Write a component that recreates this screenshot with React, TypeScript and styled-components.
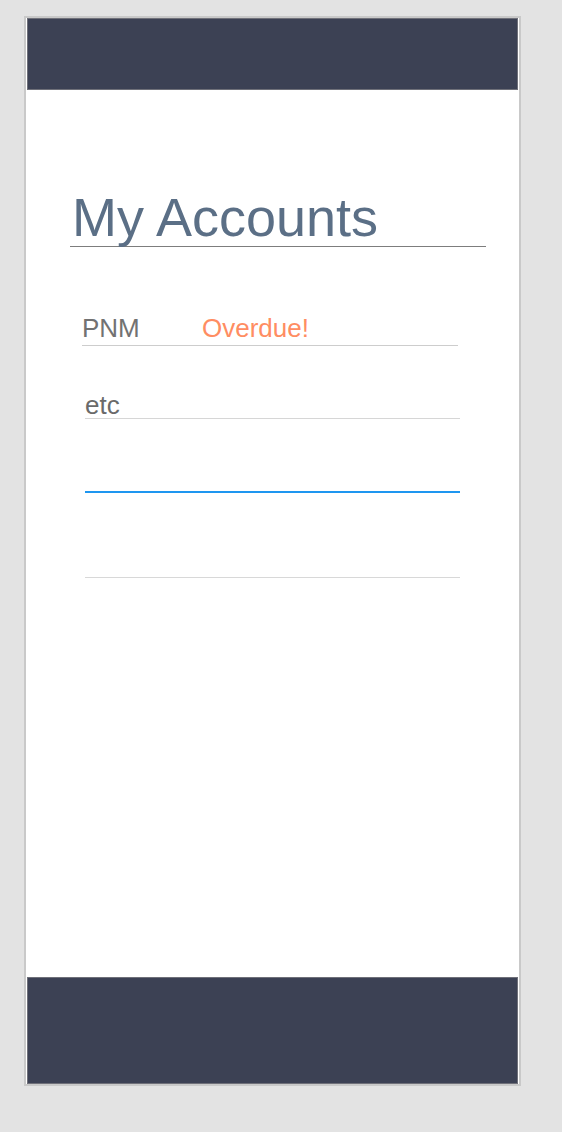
import React from "react";
import styled, { createGlobalStyle } from "styled-components";

const GlobalStyle = createGlobalStyle`
  html, body {
    margin: 0;
    padding: 0;
    background: #e3e3e3;
  }
  body {
    font-family: "Liberation Sans", Arial, Helvetica, sans-serif;
  }
`;

const Page = styled.div`
  padding: 16px 0 0 24px;
  min-height: 1132px;
  box-sizing: border-box;
`;

const Frame = styled.div`
  width: 497px;
  height: 1070px;
  box-sizing: border-box;
  border: 2px solid #c9c9c9;
  background: #ffffff;
  display: flex;
  flex-direction: column;
`;

const Bar = styled.div<{ $h: number }>`
  height: ${(p) => p.$h}px;
  flex: 0 0 auto;
  box-sizing: border-box;
  background: #3c4154;
  border: 1px solid #6f7079;
  margin: 0 1px 0 1px;
`;

const Main = styled.main`
  flex: 1;
  padding: 98px 0 0 44px;
  display: flex;
  flex-direction: column;
`;

const Title = styled.h1`
  margin: 0;
  width: 414px;
  padding-left: 2px;
  font-size: 54px;
  line-height: 58px;
  font-weight: 400;
  color: #5b6f86;
  border-bottom: 1px solid #7d7d7d;
`;

const Field = styled.div<{ $mt: number; $left: number; $w: number; $line: string; $lw: number }>`
  margin-top: ${(p) => p.$mt}px;
  margin-left: ${(p) => p.$left}px;
  width: ${(p) => p.$w}px;
  display: flex;
  align-items: flex-start;
  border-bottom: ${(p) => p.$lw}px solid ${(p) => p.$line};
`;

const Label = styled.span<{ $size: number; $lh: number; $w?: number; $color: string }>`
  font-size: ${(p) => p.$size}px;
  line-height: ${(p) => p.$lh}px;
  color: ${(p) => p.$color};
  width: ${(p) => (p.$w ? `${p.$w}px` : "auto")};
  display: block;
`;

const Spacer = styled.div<{ $h: number }>`
  height: ${(p) => p.$h}px;
`;

export default function App() {
  return (
    <>
      <GlobalStyle />
      <Page>
        <Frame>
          <Bar $h={72} />
          <Main>
            <Title>My Accounts</Title>
            <Field $mt={66} $left={12} $w={376} $line="#cdcdcd" $lw={1}>
              <Spacer $h={32} />
              <Label $size={26} $lh={30} $w={120} $color="#727272">
                PNM
              </Label>
              <Label $size={26} $lh={30} $color="#ff8d62">
                Overdue!
              </Label>
            </Field>
            <Field $mt={46} $left={15} $w={375} $line="#d6d6d6" $lw={1}>
              <Label $size={26} $lh={26} $color="#6a6a6a">
                etc
              </Label>
            </Field>
            <Field $mt={46} $left={15} $w={375} $line="#1e96f0" $lw={2}>
              <Spacer $h={26} />
            </Field>
            <Field $mt={58} $left={15} $w={375} $line="#d8d8d8" $lw={1}>
              <Spacer $h={26} />
            </Field>
          </Main>
          <Bar $h={107} />
        </Frame>
      </Page>
    </>
  );
}
